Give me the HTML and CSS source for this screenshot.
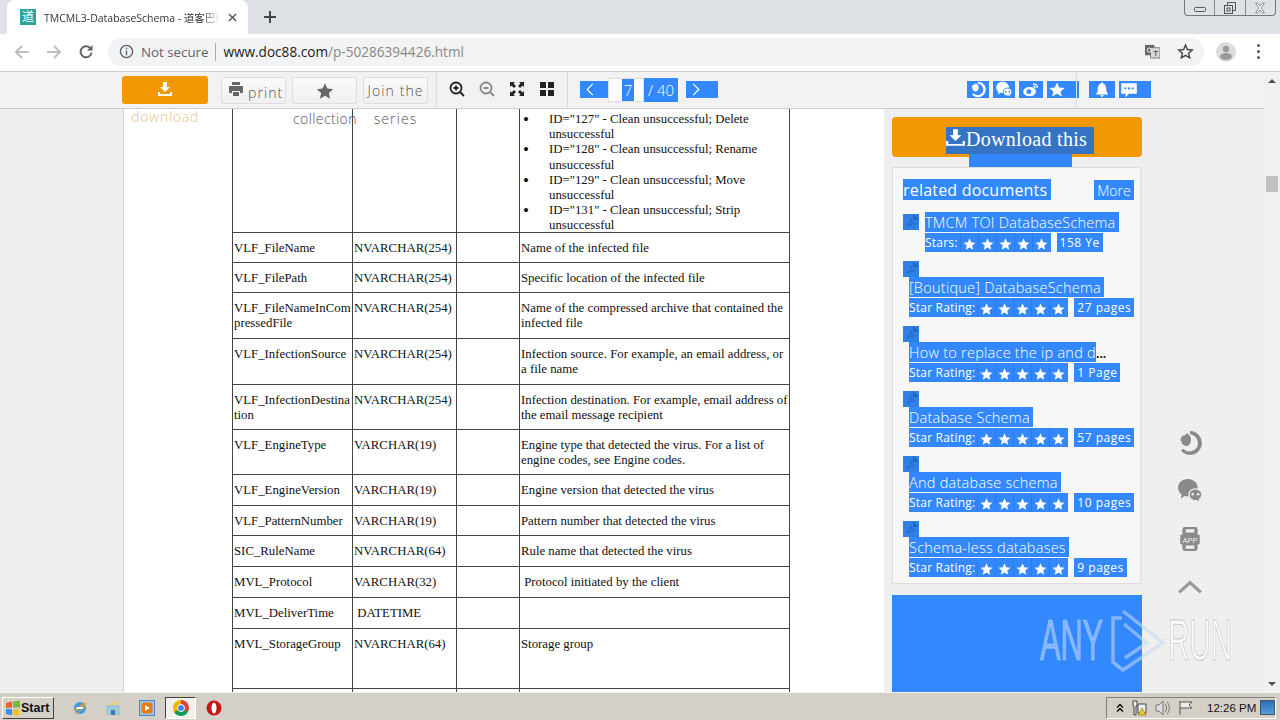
FILE: index.html
```html
<!DOCTYPE html>
<html lang="en">
<head>
<meta charset="utf-8">
<title>TMCML3-DatabaseSchema</title>
<link rel="stylesheet" href="styles.css">
</head>
<body>
<svg class="sprite" aria-hidden="true">
  <symbol id="star" viewBox="0 0 24 24"><path d="M12 1.500l3.200 7.200 7.800.8-5.900 5.200 1.700 7.700L12 18.400l-6.800 4 1.700-7.700L1 9.500l7.800-.8z"/></symbol>
  <symbol id="qq" viewBox="0 0 24 24"><path d="M12 1a11 11 0 1 1-8.500 18l2.300-1.800A8 8 0 0 0 15 19c3-1.300 4.500-4 4.300-7C19 7.500 16 4.600 12 4z"/><path d="M9 3c2.500 1 4 3.500 4 6 0 3-1.500 5-4 6-2-.5-4-1.500-5-3l1-1-2-1 1-1-1.500-1.500L5 7 4 5.500 7 5z"/></symbol>
  <symbol id="wechat" viewBox="0 0 24 24"><path d="M10 1c5.200 0 9 3.500 9 8 0 4.500-3.800 8-9 8-1 0-2-.1-3-.4L3.500 19l.8-3.800C2 13.700 1 11.500 1 9c0-4.500 3.800-8 9-8z"/><path class="wc-front" d="M17 10c3.500 0 6 2.400 6 5.400 0 1.700-.9 3.100-2.200 4.100l.6 3-3-1.600c-3.800.9-7.400-1.700-7.400-5.500 0-3 2.500-5.400 6-5.400z"/><circle cx="14.500" cy="15" r="1.200" class="hole"/><circle cx="19.500" cy="15" r="1.200" class="hole"/></symbol>
  <symbol id="pdf" viewBox="0 0 16 16"><rect width="16" height="16" fill="#2f7fe8"/><path d="M10 0l6 6h-6z" fill="#1f66c8"/><path d="M4 12c2-1 4-4 4-7 1 3 2 4 4 5-3 0-5 1-8 2z" fill="none" stroke="#2268cc"/></symbol>
</svg>

<div class="app">
  <header class="tabstrip">
    <div class="tab">
      <span class="favicon">道</span>
      <span class="tab-title">TMCML3-DatabaseSchema - 道客巴巴</span>
      <svg class="tab-close" viewBox="0 0 10 10"><path d="M1 1l8 8M9 1l-8 8"/></svg>
    </div>
    <svg class="new-tab" viewBox="0 0 12 12"><path d="M6 0v12M0 6h12"/></svg>
    <div class="win-controls">
      <span class="win-btn win-min"><svg viewBox="0 0 12 6"><rect x=".5" y=".5" width="11" height="4" rx="1"/></svg></span>
      <span class="win-btn win-max"><svg viewBox="0 0 12 12"><rect x=".5" y="3.500" width="8" height="8"/><path d="M3.500 3.500V.5h8v8H8.500"/><rect x="3" y="6" width="3" height="3"/></svg></span>
      <span class="win-btn win-close"><svg viewBox="0 0 12 12"><path d="M1.500 1h2L6 4l2.500-3h2L7 6l3.500 5h-2L6 8l-2.500 3h-2L5 6z"/></svg></span>
    </div>
  </header>

  <nav class="addressbar">
    <svg class="nav-icon nav-off" viewBox="0 0 16 16"><path d="M15 8H2M8 2L2 8l6 6"/></svg>
    <svg class="nav-icon nav-off" viewBox="0 0 16 16"><path d="M1 8h13M8 2l6 6-6 6"/></svg>
    <svg class="nav-icon nav-on" viewBox="0 0 16 16"><path d="M13.500 8.500A5.500 5.500 0 1 1 12 4"/><path class="fill" d="M14.500 1v5.500H9z"/></svg>
    <div class="omnibox">
      <svg class="info" viewBox="0 0 16 16"><circle cx="8" cy="8" r="6.500"/><path d="M8 7v5M8 4v1.600"/></svg>
      <span class="not-secure">Not secure</span>
      <span class="omni-sep"></span>
      <span class="url"><b>www.doc88.com</b>/p-50286394426.html</span>
      <svg class="translate" viewBox="0 0 16 16"><rect x="0" y="1" width="10" height="11" fill="#666"/><rect x="6" y="4" width="10" height="11" fill="#d8d8d8" stroke="#666" stroke-width=".8"/><circle cx="4.500" cy="6.500" r="2.200" fill="none" stroke="#fff"/><path d="M9 8h5M11.500 7v6" stroke="#555"/></svg>
      <svg class="omni-star" viewBox="0 0 24 24"><path d="M12 3l2.700 6.200 6.800.6-5.100 4.500 1.500 6.600L12 17.400l-5.900 3.500 1.500-6.600-5.100-4.500 6.800-.6z"/></svg>
    </div>
    <span class="avatar"><svg viewBox="0 0 20 20"><circle cx="10" cy="7" r="3.200"/><ellipse cx="10" cy="14.500" rx="6" ry="3.500"/></svg></span>
    <span class="menu-dots"><i></i><i></i><i></i></span>
  </nav>

  <div class="viewer">
    <div class="viewer-main">
      <div class="toolbar">
        <div class="tool-btn tool-download">
          <svg class="tool-svg" viewBox="0 0 16 16"><path d="M6 1h4v5h3l-5 5-5-5h3z"/><path d="M1 11h2v2h10v-2h2v4H1z"/></svg>
          <span class="btn-line">download</span>
        </div>
        <div class="tool-btn tool-print">
          <svg class="print-svg" viewBox="0 0 16 16"><path d="M4 1h8v3H4zM1 5h14v7h-3v-2H4v2H1zM5 11h6v4H5z"/></svg>
          <span>print</span>
        </div>
        <div class="tool-btn tool-collect">
          <svg class="star-svg" viewBox="0 0 24 24"><use href="#star"/></svg>
          <span class="btn-line">collection</span>
        </div>
        <div class="tool-btn tool-join"><span class="btn-text">Join the series</span></div>
        <span class="tb-sep sep-a"></span>
        <svg class="z-icon" viewBox="0 0 16 16"><circle cx="7" cy="7" r="5.500"/><path d="M11 11l4 4M4.500 7h5M7 4.500v5"/></svg>
        <svg class="z-icon z-dim" viewBox="0 0 16 16"><circle cx="7" cy="7" r="5.500"/><path d="M11 11l4 4M4.500 7h5"/></svg>
        <svg class="z-icon z-fill" viewBox="0 0 16 16"><path d="M1 1h5L4.500 2.500 7 5 5 7 2.500 4.500 1 6zM15 1v5l-1.500-1.500L11 7 9 5l2.500-2.500L10 1zM1 15v-5l1.500 1.500L5 9l2 2-2.500 2.500L6 15zM15 15h-5l1.500-1.500L9 11l2-2 2.500 2.500L15 10z"/></svg>
        <svg class="z-icon z-fill" viewBox="0 0 16 16"><path d="M1 1h6v6H1zM9 1h6v6H9zM1 9h6v6H1zM9 9h6v6H9z"/></svg>
        <span class="tb-sep sep-b"></span>
        <span class="pg-arrow pg-prev"><svg viewBox="0 0 10 16"><path d="M8 2L2 8l6 6"/></svg></span>
        <span class="pg-input"><span class="pg-current">7</span></span>
        <span class="pg-total">/ 40</span>
        <span class="pg-arrow pg-next"><svg viewBox="0 0 10 16"><path d="M2 2l6 6-6 6"/></svg></span>
        <span class="share share-a"><svg viewBox="0 0 24 24"><use href="#qq"/></svg></span>
        <span class="share share-b"><svg viewBox="0 0 24 24"><use href="#wechat"/></svg></span>
        <span class="share share-c"><svg viewBox="0 0 24 24"><ellipse cx="10" cy="15" rx="9" ry="6.500"/><circle cx="9" cy="15" r="3.500" class="hole"/><path class="line" d="M15 4c4 0 6 2.500 6 6M15 7.500c1.600 0 2.700 1 2.700 2.700"/></svg></span>
        <span class="share share-d"><svg class="left" viewBox="0 0 24 24"><path d="M12 2l3 7 8 .8-6 5 2 7.200-7-4-7 4 2-7.200-6-5L9 9z"/></svg></span>
        <span class="tb-sep sep-c"></span>
        <span class="share share-e"><svg viewBox="0 0 24 24"><path d="M12 2c1.500 0 2 1 2 2 3 1 4 4 4 7 0 4 1 6 3 8H3c2-2 3-4 3-8 0-3 1-6 4-7 0-1 .5-2 2-2zM9 20h6l-3 3z"/></svg></span>
        <span class="share share-f"><svg class="left" viewBox="0 0 24 24"><path d="M1 3h22v15H12l-5 5v-5H1z"/><circle cx="7" cy="10.500" r="1.600" class="hole"/><circle cx="12" cy="10.500" r="1.600" class="hole"/><circle cx="17" cy="10.500" r="1.600" class="hole"/></svg></span>
      </div>

      <main class="page">
        <section class="sheet">
          <table class="doc-table">
            <colgroup><col class="c1"><col class="c2"><col class="c3"><col class="c4"></colgroup>
            <tr class="r123"><td></td><td></td><td></td><td class="list-cell">
              <ul>
                <li><span>ID="127" - Clean unsuccessful; Delete unsuccessful</span></li>
                <li><span>ID="128" - Clean unsuccessful; Rename unsuccessful</span></li>
                <li><span>ID="129" - Clean unsuccessful; Move unsuccessful</span></li>
                <li><span>ID="131" - Clean unsuccessful; Strip unsuccessful</span></li>
              </ul></td></tr>
            <tr class="r30"><td>VLF_FileName</td><td>NVARCHAR(254)</td><td></td><td>Name of the infected file</td></tr>
            <tr class="r30"><td>VLF_FilePath</td><td>NVARCHAR(254)</td><td></td><td>Specific location of the infected file</td></tr>
            <tr class="r46"><td>VLF_FileNameInCom<br>pressedFile</td><td>NVARCHAR(254)</td><td></td><td>Name of the compressed archive that contained the infected file</td></tr>
            <tr class="r46"><td>VLF_InfectionSource</td><td>NVARCHAR(254)</td><td></td><td>Infection source. For example, an email address, or a file name</td></tr>
            <tr class="r45"><td>VLF_InfectionDestina<br>tion</td><td>NVARCHAR(254)</td><td></td><td>Infection destination. For example, email address of the email message recipient</td></tr>
            <tr class="r45"><td>VLF_EngineType</td><td>VARCHAR(19)</td><td></td><td>Engine type that detected the virus. For a list of engine codes, see Engine codes.</td></tr>
            <tr class="r31"><td>VLF_EngineVersion</td><td>VARCHAR(19)</td><td></td><td>Engine version that detected the virus</td></tr>
            <tr class="r30"><td>VLF_PatternNumber</td><td>VARCHAR(19)</td><td></td><td>Pattern number that detected the virus</td></tr>
            <tr class="r31"><td>SIC_RuleName</td><td>NVARCHAR(64)</td><td></td><td>Rule name that detected the virus</td></tr>
            <tr class="r31"><td>MVL_Protocol</td><td>VARCHAR(32)</td><td></td><td>&nbsp;Protocol initiated by the client</td></tr>
            <tr class="r31"><td>MVL_DeliverTime</td><td>&nbsp;DATETIME</td><td></td><td></td></tr>
            <tr class="r60"><td>MVL_StorageGroup</td><td>NVARCHAR(64)</td><td></td><td>Storage group</td></tr>
            <tr class="r30"><td></td><td></td><td></td><td></td></tr>
          </table>
        </section>

        <aside class="sidebar">
          <div class="cta">
            <span class="cta-sel"><svg viewBox="0 0 16 16"><path d="M6 1h4v5h3l-5 5-5-5h3z"/><path d="M0 11h2v2.500h12V11h2v4H0z"/></svg>Download this</span>
            <span class="cta-tail"></span>
          </div>
          <div class="related">
            <div class="related-head"><span class="rel-title">related documents</span><span class="rel-more">More</span></div>
            <article class="doc doc-first">
              <svg class="doc-icon" viewBox="0 0 16 16"><use href="#pdf"/></svg>
              <div class="doc-body">
                <div class="doc-title"><span>TMCM TOI DatabaseSchema</span></div>
                <div class="doc-meta"><span class="rating">Stars:<span class="stars"><svg viewBox="0 0 24 24"><use href="#star"/></svg><svg viewBox="0 0 24 24"><use href="#star"/></svg><svg viewBox="0 0 24 24"><use href="#star"/></svg><svg viewBox="0 0 24 24"><use href="#star"/></svg><svg viewBox="0 0 24 24"><use href="#star"/></svg></span></span><span class="pages">158 Ye</span></div>
              </div>
            </article>
            <article class="doc">
              <svg class="doc-icon" viewBox="0 0 16 16"><use href="#pdf"/></svg>
              <div class="doc-body">
                <div class="doc-title"><span>[Boutique] DatabaseSchema</span></div>
                <div class="doc-meta"><span class="rating">Star Rating:<span class="stars"><svg viewBox="0 0 24 24"><use href="#star"/></svg><svg viewBox="0 0 24 24"><use href="#star"/></svg><svg viewBox="0 0 24 24"><use href="#star"/></svg><svg viewBox="0 0 24 24"><use href="#star"/></svg><svg viewBox="0 0 24 24"><use href="#star"/></svg></span></span><span class="pages">27 pages</span></div>
              </div>
            </article>
            <article class="doc">
              <svg class="doc-icon" viewBox="0 0 16 16"><use href="#pdf"/></svg>
              <div class="doc-body">
                <div class="doc-title"><span class="clip">How to replace the ip and d</span><b class="ellipsis">...</b></div>
                <div class="doc-meta"><span class="rating">Star Rating:<span class="stars"><svg viewBox="0 0 24 24"><use href="#star"/></svg><svg viewBox="0 0 24 24"><use href="#star"/></svg><svg viewBox="0 0 24 24"><use href="#star"/></svg><svg viewBox="0 0 24 24"><use href="#star"/></svg><svg viewBox="0 0 24 24"><use href="#star"/></svg></span></span><span class="pages">1 Page</span></div>
              </div>
            </article>
            <article class="doc">
              <svg class="doc-icon" viewBox="0 0 16 16"><use href="#pdf"/></svg>
              <div class="doc-body">
                <div class="doc-title"><span>Database Schema</span></div>
                <div class="doc-meta"><span class="rating">Star Rating:<span class="stars"><svg viewBox="0 0 24 24"><use href="#star"/></svg><svg viewBox="0 0 24 24"><use href="#star"/></svg><svg viewBox="0 0 24 24"><use href="#star"/></svg><svg viewBox="0 0 24 24"><use href="#star"/></svg><svg viewBox="0 0 24 24"><use href="#star"/></svg></span></span><span class="pages">57 pages</span></div>
              </div>
            </article>
            <article class="doc">
              <svg class="doc-icon" viewBox="0 0 16 16"><use href="#pdf"/></svg>
              <div class="doc-body">
                <div class="doc-title"><span>And database schema</span></div>
                <div class="doc-meta"><span class="rating">Star Rating:<span class="stars"><svg viewBox="0 0 24 24"><use href="#star"/></svg><svg viewBox="0 0 24 24"><use href="#star"/></svg><svg viewBox="0 0 24 24"><use href="#star"/></svg><svg viewBox="0 0 24 24"><use href="#star"/></svg><svg viewBox="0 0 24 24"><use href="#star"/></svg></span></span><span class="pages">10 pages</span></div>
              </div>
            </article>
            <article class="doc">
              <svg class="doc-icon" viewBox="0 0 16 16"><use href="#pdf"/></svg>
              <div class="doc-body">
                <div class="doc-title"><span>Schema-less databases</span></div>
                <div class="doc-meta"><span class="rating">Star Rating:<span class="stars"><svg viewBox="0 0 24 24"><use href="#star"/></svg><svg viewBox="0 0 24 24"><use href="#star"/></svg><svg viewBox="0 0 24 24"><use href="#star"/></svg><svg viewBox="0 0 24 24"><use href="#star"/></svg><svg viewBox="0 0 24 24"><use href="#star"/></svg></span></span><span class="pages">9 pages</span></div>
              </div>
            </article>
          </div>
          <div class="ad-box"></div>
        </aside>

        <div class="rail">
          <svg viewBox="0 0 24 24"><use href="#qq"/></svg>
          <svg viewBox="0 0 24 24"><use href="#wechat"/></svg>
          <svg viewBox="0 0 24 24"><path d="M7 1h10a2 2 0 0 1 2 2v18a2 2 0 0 1-2 2H7a2 2 0 0 1-2-2V3a2 2 0 0 1 2-2zm1 2v3h8V3zm0 15v3h8v-3z" fill-rule="evenodd"/><rect x="3" y="8" width="18" height="9" rx="1"/><text x="12" y="15.500" text-anchor="middle" class="app-label">APP</text></svg>
          <svg class="rail-up" viewBox="0 0 24 24"><path d="M2 17L12 8l10 9"/></svg>
        </div>

        <svg class="watermark" viewBox="0 0 200 64">
          <text x="2" y="51" class="wm-text wm-any" textLength="63" lengthAdjust="spacingAndGlyphs">ANY</text>
          <path class="wm-play" d="M84 9H75v44l10 8M85 2l40 32-40 27-8-6M86 15l23 19-22 15"/>
          <text x="130" y="51" class="wm-text wm-run" textLength="64" lengthAdjust="spacingAndGlyphs">RUN</text>
        </svg>
      </main>
    </div>
    <div class="scrollbar">
      <span class="sb-arrow sb-up"></span>
      <span class="sb-thumb"></span>
      <span class="sb-arrow sb-down"></span>
    </div>
  </div>

  <footer class="taskbar">
    <div class="start"><svg viewBox="0 0 16 16"><path d="M1 3l6-1.500v6L1 8z" fill="#e8622a"/><path d="M8 1.500l7-1v7L8 7.500z" fill="#7ab83a"/><path d="M1 9l6 .2v6L1 14z" fill="#3a8ae0"/><path d="M8 9.200l6 .2v6.100l-6-.5z" fill="#f4c020"/></svg>Start</div>
    <svg class="tb-app app-ie" viewBox="0 0 16 16"><circle cx="8" cy="8" r="6" fill="#3c9ae0"/><path d="M3 11L13 3" stroke="#e8a020" stroke-width="2"/><path d="M4.500 8h7" stroke="#fff" stroke-width="2"/><path d="M2 14c3 1 9-4 12-11" stroke="#e0b030" fill="none"/></svg>
    <svg class="tb-app app-folder" viewBox="0 0 16 16"><path d="M1 4h5l1-2h6v3H1z" fill="#e8d080"/><path d="M1 5h14v10H1z" fill="#9cc8d8"/><path d="M6 10h4v5H6z" fill="#3a7ab0"/></svg>
    <svg class="tb-app app-media" viewBox="0 0 16 16"><rect x=".5" y=".5" width="15" height="15" fill="#9cc4e8" stroke="#4a88c8"/><rect x="2.500" y="2.500" width="11" height="11" rx="3" fill="#e87a18"/><path d="M6 5l5 3-5 3z" fill="#fff"/></svg>
    <span class="tb-active"><span class="chrome-logo"><i></i></span></span>
    <svg class="tb-app app-opera" viewBox="0 0 16 16"><circle cx="8" cy="8" r="7.500" fill="#c81414"/><ellipse cx="8" cy="8" rx="2.500" ry="5.500" fill="#fff"/></svg>
    <div class="tray">
      <svg class="tray-up" viewBox="0 0 8 10"><path d="M1 4.500L4 1.500l3 3M1 8.500L4 5.500l3 3"/></svg>
      <svg class="tray-icon" viewBox="0 0 16 16"><path d="M2 1h4v5H5v9H3V6H2zM7 4h8v9H7z" fill="#eee" stroke="#444"/><path d="M11 8l4 7H7z" fill="#f4c820" stroke="#6a5a10" stroke-width=".5"/></svg>
      <svg class="tray-icon tray-sound" viewBox="0 0 16 16"><path d="M1 5h3l4-4v14l-4-4H1z" fill="#ddd" stroke="#777"/><path d="M10 4c2 2 2 6 0 8M12 2c3 3 3 9 0 12" fill="none" stroke="#777"/></svg>
      <svg class="tray-icon tray-flag" viewBox="0 0 16 16"><path d="M2 1v14M2 2h12l-3 3 3 3H2" fill="#eee" stroke="#555"/></svg>
      <span class="clock">12:26 PM</span>
      <span class="show-desktop"></span>
    </div>
  </footer>
</div>
</body>
</html>
```
FILE: styles.css
```css
* { box-sizing: border-box; }
html, body { margin: 0; padding: 0; height: 100%; overflow: hidden; }
body { font-family: "Open Sans", "Noto Sans CJK SC", sans-serif; color: #333; }
.sprite { display: none; }
.hole { fill: var(--hole, #3388ff); }
.wc-front { stroke: var(--hole, #3388ff); stroke-width: 1.200; }

.app { width: 1280px; height: 720px; display: flex; flex-direction: column; overflow: hidden; }

/* tabs */
.tabstrip { height: 34px; flex: none; background: #dee1e6; display: flex; align-items: flex-end; }
.tab { width: 241px; height: 34px; margin-left: 7px; background: #fff; border-radius: 8px 8px 0 0; display: flex; align-items: center; padding-left: 13px; }
.favicon { width: 16px; height: 16px; background: #2aa59f; color: #fff; font-size: 12px; line-height: 16px; text-align: center; flex: none; }
.tab-title { margin-left: 8px; width: 176px; overflow: hidden; white-space: nowrap; font-size: 10.500px; color: #333; -webkit-mask-image: linear-gradient(90deg, #000 90%, transparent); mask-image: linear-gradient(90deg, #000 90%, transparent); }
.tab-close { width: 9px; height: 9px; margin-left: 8px; fill: none; stroke: #555; stroke-width: 1.600; flex: none; }
.new-tab { width: 12px; height: 12px; margin: 0 0 11px 16px; fill: none; stroke: #444; stroke-width: 2; flex: none; }
.win-controls { margin-left: auto; align-self: flex-start; margin-right: 4px; width: 92px; height: 16px; display: flex; border: 1px solid #777; border-top: 0; border-radius: 0 0 4px 4px; }
.win-btn { flex: 1; display: flex; align-items: center; justify-content: center; }
.win-btn + .win-btn { border-left: 1px solid #888; }
.win-btn svg { width: 12px; height: 12px; fill: none; stroke: #555; }
.win-min svg { height: 6px; margin-top: 5px; }
.win-close svg { fill: #fff; stroke: #666; stroke-width: .7; }

/* address bar */
.addressbar { height: 38px; flex: none; background: #fff; border-bottom: 1px solid #ccc; display: flex; align-items: center; padding: 0 0 2px 14px; }
.nav-icon { width: 16px; height: 16px; fill: none; stroke-width: 2; flex: none; margin-right: 16px; }
.nav-off { stroke: #bcbec2; }
.nav-on { stroke: #5f6368; margin-right: 14px; }
.nav-on .fill { fill: #5f6368; stroke: none; }
.omnibox { width: 1096px; height: 28px; background: #f1f3f4; border-radius: 14px; display: flex; align-items: center; padding-left: 11px; flex: none; }
.info { width: 15px; height: 15px; fill: none; stroke: #5f6368; stroke-width: 1.500; flex: none; }
.not-secure { margin-left: 7px; font-size: 13.300px; color: #5f6368; white-space: nowrap; }
.omni-sep { width: 1px; height: 18px; background: #aaa; margin: 0 7px; }
.url { font-size: 13.600px; color: #888; white-space: nowrap; }
.url b { font-weight: 400; color: #222; }
.translate { width: 15px; height: 15px; margin-left: auto; flex: none; }
.omni-star { width: 17px; height: 17px; margin: 0 10px 0 17px; fill: none; stroke: #444; stroke-width: 2; flex: none; }
.avatar { width: 20px; height: 20px; margin-left: 12px; background: #dcdcdc; border-radius: 50%; flex: none; }
.avatar svg { display: block; fill: #999; }
.menu-dots { margin-left: 21px; display: flex; flex-direction: column; gap: 3px; }
.menu-dots i { width: 3px; height: 3px; background: #555; border-radius: 50%; }

/* viewer */
.viewer { flex: 1; min-height: 0; display: flex; }
.viewer-main { flex: 1; min-width: 0; display: flex; flex-direction: column; }
.scrollbar { width: 16px; flex: none; background: #f1f1f1; display: flex; flex-direction: column; align-items: center; }
.sb-arrow { width: 0; height: 0; border-left: 4px solid transparent; border-right: 4px solid transparent; }
.sb-up { margin-top: 7px; border-bottom: 4px solid #505050; }
.sb-thumb { width: 12px; height: 16px; margin-top: 93px; background: #c1c1c1; }
.sb-down { margin-top: auto; margin-bottom: 6px; border-top: 4px solid #505050; }

/* toolbar */
.toolbar { height: 37px; flex: none; background: #f2f2f2; border-bottom: 1px solid #ccc; display: flex; align-items: flex-start; padding-left: 122px; position: relative; z-index: 2; }
.tool-btn { height: 27px; margin-top: 5px; width: 65px; border: 1px solid #ddd; border-radius: 2px; background: linear-gradient(#fafafa, #f0f0f0); font-size: 14px; font-weight: 300; line-height: 28px; color: #555; letter-spacing: 1.100px; text-align: center; flex: none; }
.btn-text { display: block; margin-top: -1px; }
.tool-download { width: 86px; height: 28px; margin-top: 4px; background: #f39800; border: 0; border-radius: 3px; margin-right: 13px; }
.tool-svg { display: block; width: 16px; height: 16px; margin: 5px auto 0; fill: #fff; }
.btn-line { display: block; white-space: nowrap; }
.tool-download .btn-line { margin-top: 6px; color: #e8c48c; letter-spacing: .7px; }
.tool-print { display: flex; align-items: center; padding-left: 6px; gap: 4px; }
.tool-print span { margin-top: 5px; }
.print-svg { width: 16px; height: 16px; fill: #666; flex: none; margin-top: -3px; }
.tool-collect { margin: 5px 6px; }
.star-svg { display: block; width: 18px; height: 18px; margin: 4px auto 0; fill: #666; }
.tool-collect .btn-line { margin-top: 5px; color: #555; letter-spacing: .4px; }
.tb-sep { width: 1px; height: 36px; background: #ddd; flex: none; }
.sep-a { margin: 0 12px 0 8px; }
.z-icon { width: 16px; height: 16px; margin: 9px 14px 0 0; fill: none; stroke: #222; stroke-width: 1.800; flex: none; }
.z-dim { stroke: #888; }
.z-fill { fill: #222; stroke: none; }
.sep-b { margin: 0 12px 0 -2px; }
.pg-arrow { height: 17px; margin-top: 9px; background: #3388ff; display: flex; align-items: center; flex: none; }
.pg-arrow svg { width: 10px; height: 15px; fill: none; stroke: #fff; stroke-width: 1.300; margin-left: 5px; }
.pg-prev { width: 28px; }
.pg-input { width: 36px; height: 24px; margin-top: 6px; background: #fff; border: 1px solid #ddd; padding-left: 13px; flex: none; }
.pg-current { display: block; width: 12px; height: 22px; background: #3388ff; color: #fff; font-size: 15px; font-weight: 300; line-height: 22px; text-align: center; }
.pg-total { width: 34px; height: 24px; margin-top: 6px; background: #3388ff; color: #fff; font-size: 15px; font-weight: 300; line-height: 24px; text-align: center; flex: none; }
.pg-next { width: 32px; margin-left: 8px; }
.share { height: 17px; margin-top: 9px; background: #3388ff; display: flex; align-items: center; justify-content: center; flex: none; }
.share svg { width: 18px; height: 17px; fill: #fff; }
.share svg.left { margin-right: auto; margin-left: 1px; }
.share .line { fill: none; stroke: #fff; stroke-width: 2; }
.share-a { width: 22px; margin-left: 249px; }
.share-b { width: 22px; margin-left: 4px; }
.share-c { width: 24px; margin-left: 4px; }
.share-d { width: 32px; margin-left: 4px; }
.sep-c { margin-left: -3px; }
.share-e { width: 26px; margin-left: 12px; }
.share-f { width: 32px; margin-left: 4px; }

/* page */
.page { flex: 1; min-height: 0; display: flex; overflow: hidden; padding-left: 123px; position: relative; background: #f0f0f0 radial-gradient(#ebebeb 1px, transparent 1px) 0 0 / 4px 4px; }
.sheet { width: 761px; flex: none; background: #fff; border-left: 1px solid #d8d8d8; padding-left: 108px; }
.doc-table { width: 557px; table-layout: fixed; border-collapse: collapse; font-family: "Liberation Serif", serif; font-size: 12.800px; line-height: 15.200px; color: #111; }
.c1 { width: 120px; } .c2 { width: 104px; } .c3 { width: 63px; } .c4 { width: 270px; }
.doc-table td { border: 1px solid #444; padding: 8px 0 0 1px; vertical-align: top; }
.doc-table tr:first-child td { border-top: 0; padding-top: 3px; }
.r123 { height: 123px; } .r60 { height: 60px; } .r46 { height: 46px; } .r45 { height: 45px; } .r31 { height: 31px; } .r30 { height: 30px; }
.doc-table ul { margin: 0; padding: 0 0 0 2px; list-style: none; height: 118px; }
.doc-table li { display: flex; }
.doc-table li::before { content: "\2022"; width: 26px; flex: none; font-size: 17px; }

/* sidebar */
.sidebar { width: 250px; margin-left: 8px; flex: none; padding-top: 8px; }
.cta { height: 40px; background: #f39800; border-radius: 4px; display: flex; flex-direction: column; align-items: center; padding: 10px 0 0 6px; margin-bottom: 10px; }
.cta-sel { width: 148px; height: 27px; flex: none; background: #3573c4; color: #fff; font-size: 20px; line-height: 24px; white-space: nowrap; font-family: "Liberation Serif", serif; letter-spacing: .3px; display: flex; align-items: flex-start; }
.cta-sel svg { width: 19px; height: 19px; fill: #fff; flex: none; margin: 1px 1px 0 0; }
.cta-tail { width: 103px; height: 13px; flex: none; background: #3388ff; }
.related { width: 249px; height: 417px; background: #f7f7f7; border: 1px solid #ddd; padding: 11px 6px 0 10px; }
.related-head { display: flex; justify-content: space-between; align-items: flex-start; height: 35px; }
.rel-title { background: #3388ff; color: #fff; height: 21px; line-height: 22px; font-size: 16px; letter-spacing: .2px; width: 148px; white-space: nowrap; overflow: hidden; }
.rel-more { background: #3388ff; color: #fff; height: 20px; margin-top: 1px; line-height: 21px; font-size: 14px; font-weight: 300; width: 40px; text-align: center; }
.doc { height: 65px; }
.doc-first { display: flex; height: 47px; }
.doc-icon { display: block; width: 16px; height: 16px; flex: none; }
.doc-body { padding-left: 6px; }
.doc-first .doc-body { margin-top: -2px; }
.doc-title { height: 21px; display: flex; font-size: 14.500px; font-weight: 300; line-height: 22px; color: #fff; white-space: nowrap; letter-spacing: .25px; }
.doc-title span { background: #3388ff; height: 20px; padding-right: 3px; }
.doc-title .clip { width: 187px; overflow: hidden; padding: 0; }
.ellipsis { color: #111; font-size: 12px; line-height: 24px; font-weight: 700; letter-spacing: 0; }
.doc-meta { display: flex; height: 19px; font-size: 12px; line-height: 20px; color: #fff; gap: 6px; white-space: nowrap; }
.rating { background: #3388ff; height: 19px; display: flex; letter-spacing: .2px; padding-right: 1px; }
.stars { display: flex; margin-left: 2px; }
.stars svg { width: 18px; height: 19px; padding: 4px 2px 1px; fill: #fff; border-left: 1px solid #2a7ae8; }
.pages { background: #3388ff; height: 19px; padding: 0 3px; letter-spacing: .5px; }
.ad-box { width: 250px; height: 110px; margin-top: 11px; background: #3388ff; }

/* right rail */
.rail { width: 96px; flex: none; padding-top: 310px; display: flex; flex-direction: column; align-items: center; --hole: #eeeeee; }
.rail svg { width: 26px; height: 26px; margin: 11px 0; flex: none; fill: #8a8a8a; }
.rail-up { fill: none !important; stroke: #9a9a9a; stroke-width: 3; }
.app-label { font-size: 7px; font-family: "Liberation Sans", sans-serif; fill: #eee; }
.watermark { position: absolute; left: 1038px; top: 500px; width: 200px; height: 64px; fill: none; overflow: visible; }
.wm-text { font-family: "Liberation Sans", sans-serif; font-size: 58px; }
.wm-any { fill: #fff; fill-opacity: .4; stroke: #fff; stroke-opacity: .3; stroke-width: 1.200; }
.wm-run { fill: #fbfbfb; stroke: #a8a8a8; stroke-opacity: .55; stroke-width: 1.200; }
.wm-play { fill: none; stroke: #c4d8f2; stroke-opacity: .55; stroke-width: 3.500; }

/* taskbar */
.taskbar { height: 28px; flex: none; background: #d4d0c8; border-top: 1px solid #f4f2ee; display: flex; align-items: center; padding: 0 4px 0 2px; position: relative; z-index: 3; }
.start { width: 52px; height: 22px; margin-top: 2px; background: #d4d0c8; border: 1px solid; border-color: #fff #404040 #404040 #fff; display: flex; align-items: center; font-family: "Liberation Sans", sans-serif; font-weight: 700; font-size: 12.500px; color: #111; padding-left: 2px; flex: none; }
.start svg { width: 16px; height: 16px; }
.tb-app { width: 16px; height: 16px; flex: none; margin-top: 2px; }
.app-ie { margin-left: 18px; }
.app-folder { margin-left: 17px; }
.app-media { margin-left: 18px; }
.tb-active { width: 31px; height: 22px; margin: 2px 10px 0 10px; background: #f2f0ec; border: 1px solid; border-color: #404040 #fff #fff #404040; display: flex; align-items: center; justify-content: center; flex: none; }
.chrome-logo { width: 16px; height: 16px; border-radius: 50%; background: conic-gradient(#db4437 0 33%, #0f9d58 33% 66%, #f4b400 66%); display: flex; align-items: center; justify-content: center; }
.chrome-logo i { width: 8px; height: 8px; border-radius: 50%; background: #4285f4; border: 1px solid #fff; }
.tray { margin-left: auto; width: 170px; height: 22px; margin-top: 2px; border: 1px solid; border-color: #808080 #fff #fff #808080; display: flex; align-items: center; padding-left: 9px; flex: none; font-family: "Liberation Sans", sans-serif; font-size: 11.500px; color: #111; }
.tray-up { width: 8px; height: 10px; fill: none; stroke: #111; stroke-width: 1.500; flex: none; }
.tray-icon { width: 16px; height: 16px; margin-left: 7px; flex: none; }
.tray-sound { margin-left: 8px; }
.clock { margin-left: 13px; white-space: nowrap; }
.show-desktop { width: 15px; height: 15px; margin-left: auto; background: linear-gradient(#2a70b8, #5a9ad8); border: 1px solid #456; flex: none; }
```
